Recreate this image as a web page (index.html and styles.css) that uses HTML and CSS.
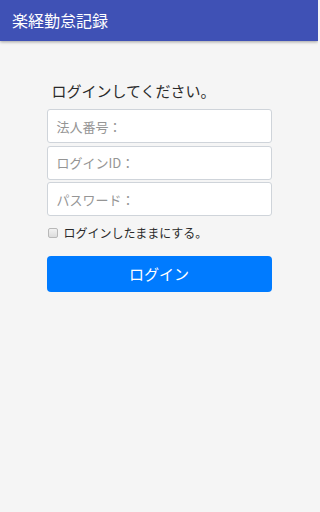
FILE: index.html
```html
<!DOCTYPE html>
<html lang="ja">
<head>
<meta charset="utf-8">
<link rel="stylesheet" href="styles.css">
</head>
<body>
<header class="appbar">
  <span class="appbar-title">楽経勤怠記録</span>
</header>
<main class="login">
  <div class="login-form">
    <p class="login-heading">ログインしてください。</p>
    <div class="field">法人番号：</div>
    <div class="field">ログインID：</div>
    <div class="field">パスワード：</div>
    <label class="remember">
      <span class="checkbox"></span>
      <span class="remember-text">ログインしたままにする。</span>
    </label>
    <div class="login-button">ログイン</div>
  </div>
</main>
</body>
</html>
```
FILE: styles.css
```css
html, body {
  margin: 0;
  padding: 0;
}
body {
  background: #f5f5f5;
  font-family: "Noto Sans CJK JP", "Noto Sans", Roboto, sans-serif;
  width: 318px;
  height: 512px;
  overflow: hidden;
}
.appbar {
  height: 41px;
  background: #3f51b5;
  box-shadow: 0 1px 3px rgba(0,0,0,0.35);
  display: flex;
  align-items: center;
  padding-left: 12px;
  position: relative;
}
.appbar-title {
  color: #fff;
  font-size: 16px;
  line-height: 20px;
  margin-top: -1px;
}
.login {
  display: flex;
  justify-content: center;
  padding-top: 40px;
}
.login-form {
  width: 225px;
  display: flex;
  flex-direction: column;
}
.login-heading {
  margin: 0 0 8px 5px;
  font-size: 15px;
  line-height: 20px;
  color: #2a2a2a;
}
.field {
  box-sizing: border-box;
  height: 34px;
  margin-bottom: 2.5px;
  background: #fff;
  border: 1px solid #cfd4da;
  border-radius: 3px;
  padding-left: 9px;
  display: flex;
  align-items: center;
  font-size: 13px;
  color: #959595;
}
.remember {
  display: flex;
  align-items: center;
  margin-top: 5px;
  height: 18px;
  padding-left: 1px;
}
.checkbox {
  box-sizing: border-box;
  width: 10px;
  height: 10px;
  border: 1px solid #b8b8b8;
  border-radius: 2px;
  background: linear-gradient(#f2f2f2, #dcdcdc);
  margin-right: 6px;
}
.remember-text {
  font-size: 12px;
  color: #2a2a2a;
}
.login-button {
  margin-top: 14px;
  height: 36px;
  background: #007bff;
  border-radius: 4px;
  color: #fff;
  font-size: 15px;
  display: flex;
  align-items: center;
  justify-content: center;
}
```
